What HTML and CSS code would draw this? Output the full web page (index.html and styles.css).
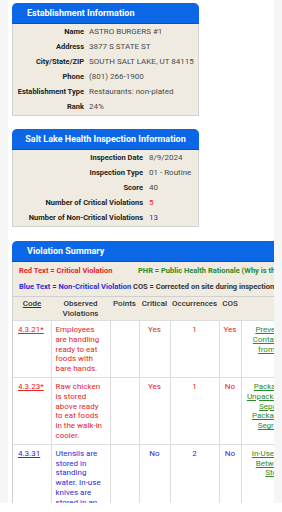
FILE: index.html
```html
<!DOCTYPE html>
<html>
<head>
<meta charset="utf-8">
<link rel="stylesheet" href="styles.css">
</head>
<body>
<div class="page">
  <section class="panel panel-est">
    <h2 class="panel-title">Establishment Information</h2>
    <dl class="info info-est">
      <dt>Name</dt><dd>ASTRO BURGERS #1</dd>
      <dt>Address</dt><dd>3877 S STATE ST</dd>
      <dt>City/State/ZIP</dt><dd>SOUTH SALT LAKE, UT 84115</dd>
      <dt>Phone</dt><dd>(801) 266-1900</dd>
      <dt>Establishment Type</dt><dd>Restaurants: non-plated</dd>
      <dt>Rank</dt><dd>24%</dd>
    </dl>
  </section>

  <section class="panel panel-insp">
    <h2 class="panel-title title-center">Salt Lake Health Inspection Information</h2>
    <dl class="info info-insp">
      <dt>Inspection Date</dt><dd>8/9/2024</dd>
      <dt>Inspection Type</dt><dd>01 - Routine</dd>
      <dt>Score</dt><dd>40</dd>
      <dt>Number of Critical Violations</dt><dd class="crit">5</dd>
      <dt>Number of Non-Critical Violations</dt><dd class="noncrit">13</dd>
    </dl>
  </section>

  <section class="panel panel-wide">
    <h2 class="panel-title">Violation Summary</h2>
    <div class="vbody">
      <div class="legend">
        <div class="legend-row">
          <span class="key key-1 crit">Red Text = Critical Violation</span>
          <span class="phr">PHR = Public Health Rationale (Why is this important?)</span>
        </div>
        <div class="legend-row">
          <span class="key key-2 noncrit">Blue Text = Non-Critical Violation</span>
          <span class="cos">COS = Corrected on site during inspection</span>
        </div>
      </div>
      <table class="vtable">
        <colgroup>
          <col class="c-code"><col class="c-obs"><col class="c-pts"><col class="c-crit"><col class="c-occ"><col class="c-cos"><col class="c-phr">
        </colgroup>
        <thead>
          <tr>
            <th><span class="sort">Code</span></th>
            <th>Observed Violations</th>
            <th>Points</th>
            <th>Critical</th>
            <th>Occurrences</th>
            <th>COS</th>
            <th>PHR</th>
          </tr>
        </thead>
        <tbody>
          <tr class="crit">
            <td class="code"><a>4.3.21*</a></td>
            <td class="obs">Employees are handling ready to eat foods with bare hands.</td>
            <td></td>
            <td class="mid">Yes</td>
            <td class="mid">1</td>
            <td class="mid">Yes</td>
            <td class="mid phr-cell"><a class="phr-link">Prevention of Contamination from Hands</a></td>
          </tr>
          <tr class="crit">
            <td class="code"><a>4.3.23*</a></td>
            <td class="obs">Raw chicken is stored above ready to eat foods in the walk-in cooler.</td>
            <td></td>
            <td class="mid">Yes</td>
            <td class="mid">1</td>
            <td class="mid">No</td>
            <td class="mid phr-cell"><a class="phr-link">Packaged and Unpackaged Food Separation, Packaging, and Segregation</a></td>
          </tr>
          <tr class="noncrit">
            <td class="code"><a>4.3.31</a></td>
            <td class="obs">Utensils are stored in standing water. In-use knives are stored in an area that is not clean.</td>
            <td></td>
            <td class="mid">No</td>
            <td class="mid">2</td>
            <td class="mid">No</td>
            <td class="mid phr-cell"><a class="phr-link">In-Use Utensils, Between-Use Storage</a></td>
          </tr>
        </tbody>
      </table>
    </div>
  </section>
</div>
</body>
</html>
```

FILE: styles.css
```css
html {
  background: #ffffff;
}
body {
  margin: 0;
  height: 503px;
  overflow: hidden;
  background: #f6f6f6;
  font-family: Roboto, "Liberation Sans", sans-serif;
  font-size: 8px;
  color: #333;
}
.page {
  margin: 0 8px;
  height: 503px;
  overflow: hidden;
  background: #ffffff;
  padding: 3px 0 0 4px;
  box-sizing: border-box;
}
.panel {
  width: 187px;
  margin-bottom: 13px;
}
.panel-insp {
  margin-bottom: 14px;
}
.panel-wide {
  width: 330px;
}
.panel-title {
  margin: 0;
  height: 20px;
  line-height: 20px;
  padding-left: 15px;
  background: #0b67e6;
  border-bottom: 1px solid #0a52b8;
  border-radius: 5px 5px 0 0;
  color: #ffffff;
  font-size: 9px;
  font-weight: bold;
}
.title-center {
  padding-left: 0;
  text-align: center;
}
.info {
  display: grid;
  margin: 0;
  padding: 0 0 1px;
  background: #efebe0;
  border: 1px solid #d2d2d2;
  border-top: 0;
  line-height: 15px;
}
.info-est {
  grid-template-columns: 71px 1fr;
  column-gap: 5px;
}
.info-insp {
  grid-template-columns: 130px 1fr;
  column-gap: 6px;
}
.info dt {
  text-align: right;
  font-size: 7.5px;
  font-weight: bold;
  color: #222;
  white-space: nowrap;
}
.info dd {
  margin: 0;
  color: #4a4a4a;
  white-space: nowrap;
}
.crit {
  color: #e3241f;
}
.noncrit {
  color: #2b2bd8;
}
.info dd.crit {
  color: #e3241f;
}
.info dd.noncrit {
  color: #2b2bd8;
}
.vbody {
  background: #efebe0;
  border-left: 1px solid #d2d2d2;
}
.legend {
  padding: 1px 0 1px;
  border-bottom: 1px solid #cfcfcf;
  font-size: 7.5px;
  font-weight: bold;
}
.legend-row {
  display: flex;
  height: 16px;
  line-height: 16px;
  padding-left: 6px;
  white-space: nowrap;
}
.key-1 {
  width: 119px;
}
.key-2 {
  width: 114px;
}
.phr {
  color: #2a8a2a;
}
.cos {
  color: #333;
}
.vtable {
  border-collapse: collapse;
  table-layout: fixed;
  width: 312px;
}
.c-code { width: 38px; }
.c-obs { width: 59px; }
.c-pts { width: 29px; }
.c-crit { width: 31px; }
.c-occ { width: 49px; }
.c-cos { width: 22px; }
.c-phr { width: 84px; }
.vtable th {
  padding: 2px 2px 1px;
  line-height: 10px;
  font-weight: 500;
  color: #333;
  text-align: center;
  vertical-align: top;
}
.sort {
  text-decoration: underline;
}
.vtable td {
  background: #ffffff;
  border: 1px solid #dddddd;
  padding: 4px 4px 3px;
  line-height: 9.8px;
  vertical-align: top;
}
.vtable td:first-child {
  border-left: 0;
}
.vtable td.code {
  padding-left: 5px;
}
.vtable td.mid {
  text-align: center;
}
.vtable td.phr-cell {
  padding-right: 12px;
}
.vtable a {
  text-decoration: underline;
}
.vtable .phr-link {
  color: #2a8a2a;
}
```
